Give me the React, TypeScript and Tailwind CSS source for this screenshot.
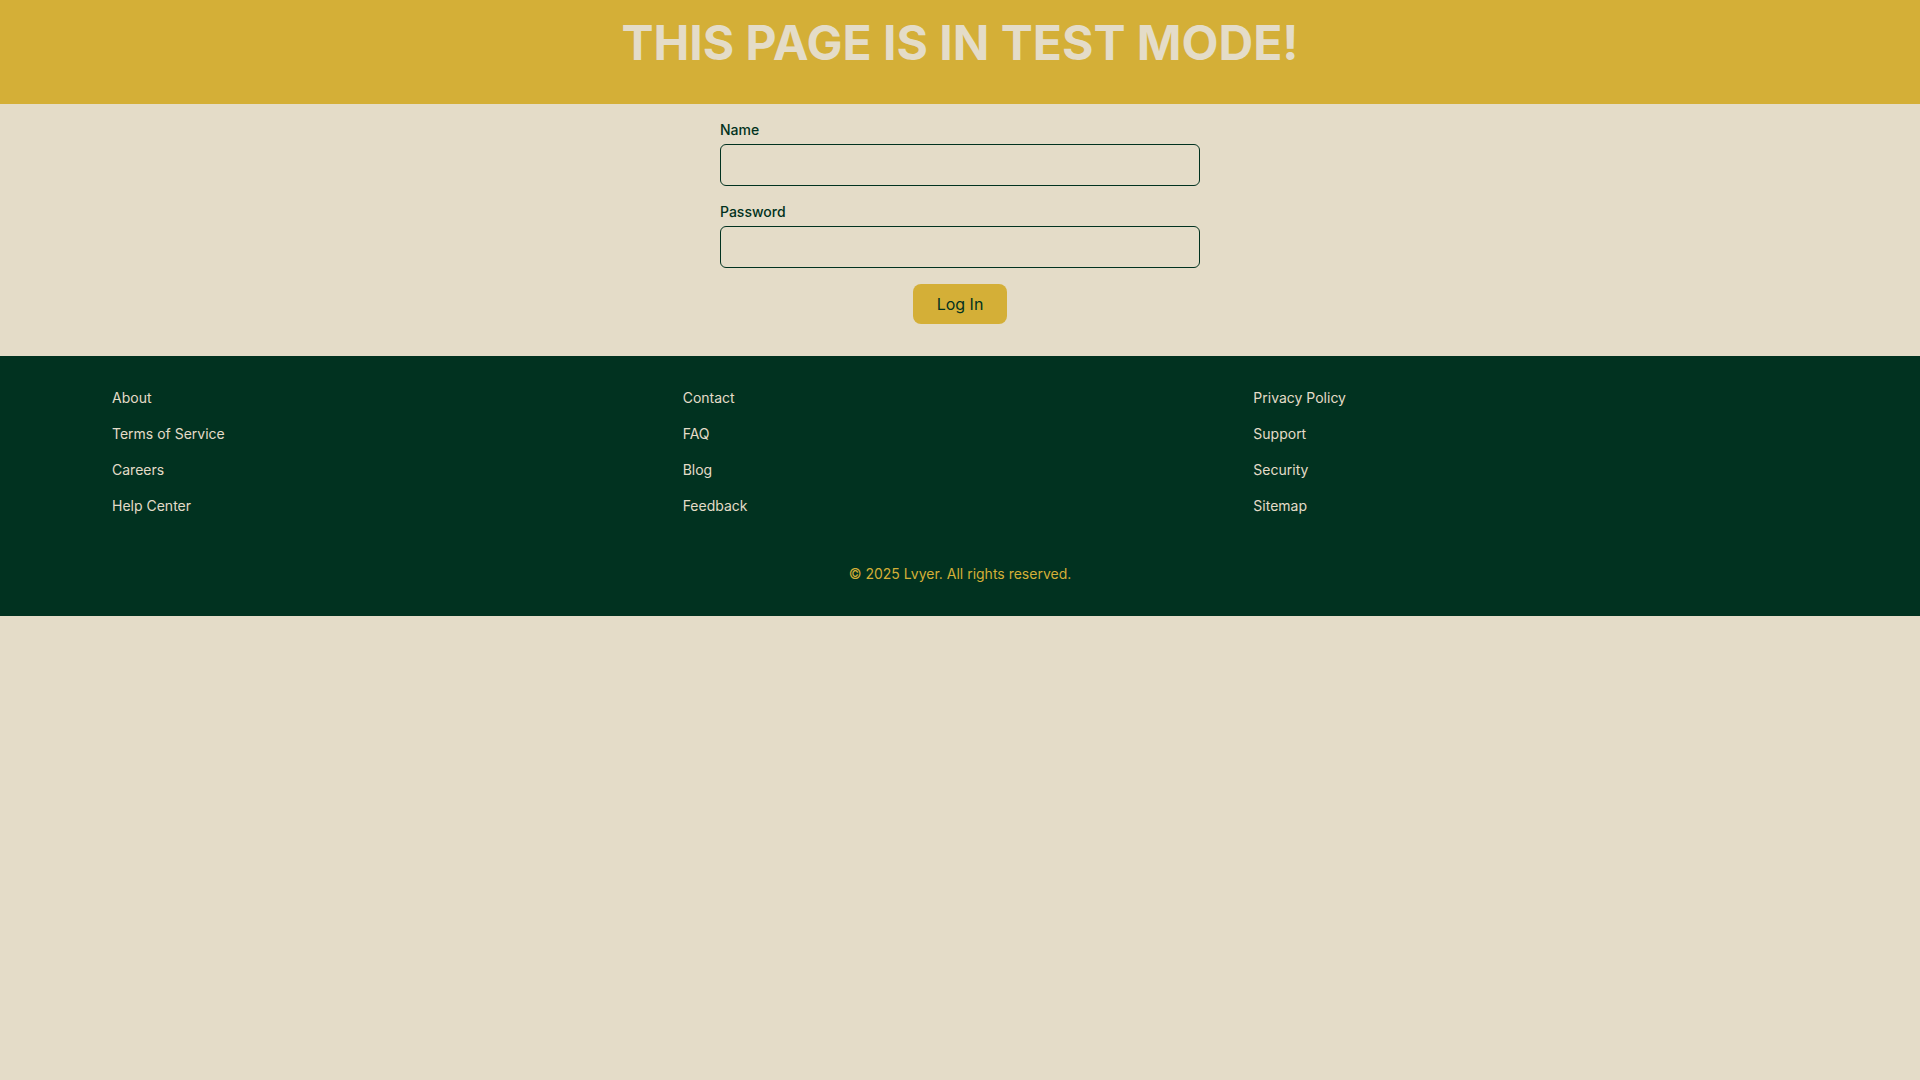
const footerColumns = [
  ["About", "Terms of Service", "Careers", "Help Center"],
  ["Contact", "FAQ", "Blog", "Feedback"],
  ["Privacy Policy", "Support", "Security", "Sitemap"],
];

const App = () => {
  return (
    <div className="min-h-screen bg-[#e4dcc8] font-['Inter','Liberation_Sans',sans-serif] text-[#013220]">
      <header className="bg-[#d4af37] pt-[19px] pb-[37px] text-center">
        <h1 className="text-5xl font-bold text-[#e4dcc8]">
          THIS PAGE IS IN TEST MODE!
        </h1>
      </header>

      <main className="pt-4 pb-8">
        <form className="mx-auto w-[480px]" onSubmit={(e) => e.preventDefault()}>
          <div className="mb-4">
            <label className="mb-1 block text-sm font-medium">Name</label>
            <input
              type="text"
              className="block w-full rounded-md border border-[#013220] bg-transparent px-3 py-2 text-base outline-none"
            />
          </div>
          <div className="mb-4">
            <label className="mb-1 block text-sm font-medium">Password</label>
            <input
              type="password"
              className="block w-full rounded-md border border-[#013220] bg-transparent px-3 py-2 text-base outline-none"
            />
          </div>
          <div className="flex justify-center">
            <button
              type="submit"
              className="rounded-lg bg-[#d4af37] px-6 py-2 text-base text-[#013220]"
            >
              Log In
            </button>
          </div>
        </form>
      </main>

      <footer className="bg-[#013220] px-28 py-8 text-sm text-[#e4dcc8]">
        <div className="grid grid-cols-3 gap-4">
          {footerColumns.map((col, i) => (
            <ul key={i} className="space-y-4">
              {col.map((link) => (
                <li key={link}>
                  <a href="#">{link}</a>
                </li>
              ))}
            </ul>
          ))}
        </div>
        <p className="mt-12 text-center text-[#d4af37]">
          © 2025 Lvyer. All rights reserved.
        </p>
      </footer>
    </div>
  );
};

export default App;
